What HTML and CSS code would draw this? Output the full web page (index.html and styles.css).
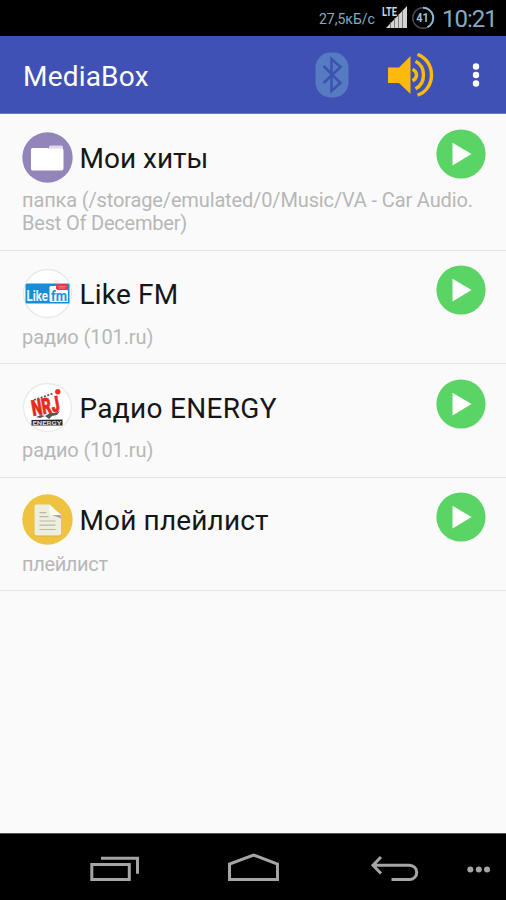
FILE: index.html
```
<!DOCTYPE html>
<html lang="ru">
<head>
<meta charset="utf-8">
<title>MediaBox</title>
<link rel="stylesheet" href="styles.css">
</head>
<body>
<svg width="0" height="0" class="defs">
  <symbol id="play" viewBox="0 0 50 50"><circle cx="25" cy="25" r="24.6" fill="#5ad565"/><path d="M16.5 13.8v22.6L35.5 25z" fill="#fff"/></symbol>
</svg>
<div class="status">
  <span class="speed">27,5кБ/с</span>
  <svg class="signal" width="26" height="24" viewBox="0 0 26 24">
    <path d="M4 23L25 1v22z" fill="#d2d2d2"/>
    <path d="M8.5 17v6M12.5 13v10M16.5 9v14M20.5 5v18" stroke="#666" stroke-width=".8"/>
    <path d="M0 0h15.5v11.5H0z" fill="#000"/>
    <text x="0" y="10.5" textLength="15" lengthAdjust="spacingAndGlyphs">LTE</text>
  </svg>
  <svg class="battery" width="24" height="24" viewBox="0 0 24 24" fill="none">
    <circle cx="12" cy="12" r="10.2" stroke="#424c52" stroke-width="1.5"/>
    <path d="M12 1.8A10.2 10.2 0 0 1 16.5 21.2" stroke="#8bb6d1" stroke-width="2"/>
    <text x="5.3" y="16.3" textLength="12.5" lengthAdjust="spacingAndGlyphs">41</text>
  </svg>
  <span class="clock">10:21</span>
</div>
<header class="appbar">
  <h1>MediaBox</h1>
  <svg class="bluetooth" width="34" height="46" viewBox="0 0 34 46" fill="none">
    <rect x=".5" y=".5" width="33" height="45" rx="15" fill="#577bc2"/>
    <path d="M8.5 14l17 17-9 8V7l9 8-17 16" stroke="#3c52af" stroke-width="2.5"/>
  </svg>
  <svg class="speaker" width="48" height="46" viewBox="0 0 48 46" fill="none">
    <path d="M1 15.5h11L23.5 4v38L12 31H1z" fill="#ffb90d"/>
    <g stroke="#ffb90d" stroke-width="3.4"><path d="M25.5 17.2q4 2 4 5.8t-4 5.8"/><path d="M28.5 9.2C34 12 36.5 17 36.5 23S34 34 28.5 36.8"/><path d="M30.5 2.3C39 5.5 44.5 13.5 44.5 23S39 40.5 30.5 43.2"/></g>
  </svg>
  <svg class="more" width="8" height="26" viewBox="0 0 8 26" fill="#fff"><circle cx="4" cy="4.5" r="3.2"/><circle cx="4" cy="13" r="3.2"/><circle cx="4" cy="21.5" r="3.2"/></svg>
</header>
<main class="list">
  <section class="item folder">
    <div class="row">
      <svg class="avatar" width="51" height="51" viewBox="0 0 51 51">
        <circle cx="25.5" cy="25.5" r="25.2" fill="#9385b9"/>
        <path d="M27 17v-2q0-1.5 1.5-1.5h11q1.5 0 1.5 1.5v4H27z" fill="#ded9e9"/>
        <path d="M10.5 16h14.8q1.3 0 2.2 .6h12.2q1.8 0 1.8 1.8v18q0 2-2 2h-29q-1.5 0-1.5-1.5V17.5q0-1.500 1.500-1.500z" fill="#fff"/>
      </svg>
      <h2>Мои хиты</h2>
      <svg class="play"><use href="#play"/></svg>
    </div>
    <p><span class="path">папка (/storage/emulated/0/Music/VA - Car Audio.</span><br><span class="path-end">Best Of December)</span></p>
  </section>
  <section class="item like-fm">
    <div class="row">
      <svg class="avatar" width="51" height="51" viewBox="0 0 51 51">
        <circle cx="25.5" cy="25.5" r="24" fill="#fff" stroke="#e9e9e9" stroke-width="1.4"/>
        <rect x="3.5" y="15.5" width="44" height="20" rx="1.5" fill="#168dd5"/>
        <path d="M29 18h13l4 5v11H29q-1.5 0-1.5-1.5v-13Q27.5 18 29 18z" fill="#fff"/>
        <rect x="34" y="16" width="12" height="6" rx="2" fill="#e43b4c"/>
        <path d="M36 18.5h8M37 20h6" stroke="#ee8b94" stroke-width=".7"/>
        <text class="like" x="4.5" y="32.5" textLength="21.5" lengthAdjust="spacingAndGlyphs">Like</text>
        <text class="fm" x="29" y="32.5" textLength="16" lengthAdjust="spacingAndGlyphs">fm</text>
      </svg>
      <h2>Like FM</h2>
      <svg class="play"><use href="#play"/></svg>
    </div>
    <p>радио (101.ru)</p>
  </section>
  <section class="item nrg">
    <div class="row">
      <svg class="avatar" width="51" height="51" viewBox="0 0 51 51">
        <defs><linearGradient id="fire" x1="0" y1="1" x2="1" y2="0"><stop stop-color="#a3201b"/><stop offset=".35" stop-color="#e52b20"/><stop offset="1" stop-color="#ff2018"/></linearGradient></defs>
        <circle cx="25.5" cy="25.5" r="24" fill="#fff" stroke="#ebebeb" stroke-width="1.4"/>
        <path d="M12 18l19-6.5" stroke="#555" stroke-width="1.7" stroke-dasharray="2 1.5"/>
        <path d="M14 35l5-2 4 1 5-3 5 0 5-2-3 4-5 1-3 3-4-3-5 2z" fill="#555"/>
        <text class="nrj" x="11" y="34" transform="rotate(-10 11 34)" textLength="28" lengthAdjust="spacingAndGlyphs">NRJ</text>
        <circle cx="35.8" cy="9.8" r="2.7" fill="#f82c25"/>
        <path d="M9.5 38l31-.5v6h-31z" fill="#242424"/>
        <text class="energy" x="10.5" y="43" textLength="29" lengthAdjust="spacingAndGlyphs">ENERGY</text>
      </svg>
      <h2>Радио ENERGY</h2>
      <svg class="play"><use href="#play"/></svg>
    </div>
    <p>радио (101.ru)</p>
  </section>
  <section class="item playlist">
    <div class="row">
      <svg class="avatar" width="51" height="51" viewBox="0 0 51 51">
        <circle cx="25.5" cy="25.5" r="25.2" fill="#eec33f"/>
        <path d="M14.5 11.5h13l11.5 12v17q0 2-2 2H14.5q-2 0-2-2v-27q0-2 2-2z" fill="#d5b044"/>
        <path d="M14.5 10.5h13L39 21v18.5q0 2-2 2H14.5q-2 0-2-2v-27q0-2 2-2z" fill="#eeeedf"/>
        <path d="M29 20.5h9.5l.5 4z" fill="#aaa5a2"/><path d="M27.5 10.5L39 21h-9q-2.5 0-2.5-2.5z" fill="#fafaf2"/>
        <path d="M17.5 18.700h7M17.500 22.700h9M17.500 27h16M17.500 31.200h16M17.500 35.500h16" stroke="#b8b8ab" stroke-width="1.2"/>
      </svg>
      <h2>Мой плейлист</h2>
      <svg class="play"><use href="#play"/></svg>
    </div>
    <p>плейлист</p>
  </section>
</main>
<nav class="navbar">
  <svg width="506" height="66" viewBox="0 0 506 66" fill="none" stroke="#a5a5a5" stroke-width="3">
    <path d="M91.8 30.5h37.5v15H91.8zM101 24.3h36.5v15.5"/>
    <path d="M229.5 45.5V30l24-9 24 9v15.5z"/>
    <path d="M373 31.2h36.500a7.200 7.200 0 0 1 0 14.400H391.500M381 23l-8 8.200 8 8.300"/>
    <g fill="#a5a5a5" stroke="none"><circle cx="470.3" cy="35.4" r="3"/><circle cx="478.8" cy="35.4" r="3"/><circle cx="487" cy="35.4" r="3"/></g>
  </svg>
</nav>
</body>
</html>
```
FILE: styles.css
```
* { box-sizing: border-box; }
body {
  margin: 0;
  width: 506px;
  height: 900px;
  display: flex;
  flex-direction: column;
  overflow: hidden;
  background: #fafafa;
  font-family: Roboto, "Noto Sans", sans-serif;
}
svg { display: block; flex: none; overflow: visible; }
.defs { position: absolute; }
.status {
  height: 36px;
  flex: none;
  display: flex;
  align-items: center;
  background: #000;
  color: #87aabf;
  padding-left: 319px;
  white-space: nowrap;
}
.speed { width: 57px; margin-top: 1px; font-size: 14px; }
.signal { margin-left: 6px; margin-top: -2px; }
.signal text { font: bold 12px Roboto, sans-serif; fill: #d5d5d5; }
.battery { margin-left: 3px; margin-top: -1px; }
.battery text { font: bold 12px Roboto, sans-serif; fill: #9bc3dc; }
.clock { margin-left: 7px; margin-top: 1px; font-size: 24px; letter-spacing: -1px; }
.appbar {
  height: 78px;
  flex: none;
  display: flex;
  align-items: center;
  background: #3f51b5;
  border-bottom: 1px solid #6e7ac0;
  padding-left: 23px;
}
h1 { margin: 3px 0 0; width: 292px; font-size: 28px; font-weight: 400; color: #fff; letter-spacing: .2px; }
.speaker { margin-left: 38px; margin-top: 1px; }
.more { margin-left: 37px; margin-top: 1px; }
.list { flex: 1; }
.item {
  height: 113.3px;
  padding: 18px 20px 0 22px;
  border-bottom: 1px solid #e5e5e5;
}
.folder { height: 137px; }
.like-fm, .playlist { padding-top: 17.3px; }
.row { display: flex; align-items: center; height: 50px; }
h2 { flex: 1; margin: 3px 0 0 6.5px; font-size: 28px; line-height: 34px; font-weight: 400; color: #161616; white-space: nowrap; }
.like-fm h2 { letter-spacing: .2px; }
.nrg h2 { letter-spacing: .3px; }
.playlist h2 { letter-spacing: .15px; }
.play { width: 50px; height: 50px; margin-top: -6px; }
p { margin: 7px 0 0; font-size: 20px; line-height: 23px; color: #b7b7b7; white-space: nowrap; letter-spacing: -.1px; }
.like-fm p, .playlist p { margin-top: 7.7px; }
.path { letter-spacing: -.14px; }
.path-end { letter-spacing: -.2px; }
.playlist p { letter-spacing: -.35px; }
.like { font: bold 14px Roboto, sans-serif; fill: #e9f7ff; }
.fm { font: bold 15px Roboto, sans-serif; fill: #258fd0; }
.nrj { font: 900 22px Roboto, sans-serif; fill: url(#fire); stroke: #e02b20; stroke-width: .7px; }
.energy { font: bold 6px Roboto, sans-serif; fill: #ddd; }
.navbar { height: 67px; flex: none; background: #000; border-top: 1px solid #555; }
```
